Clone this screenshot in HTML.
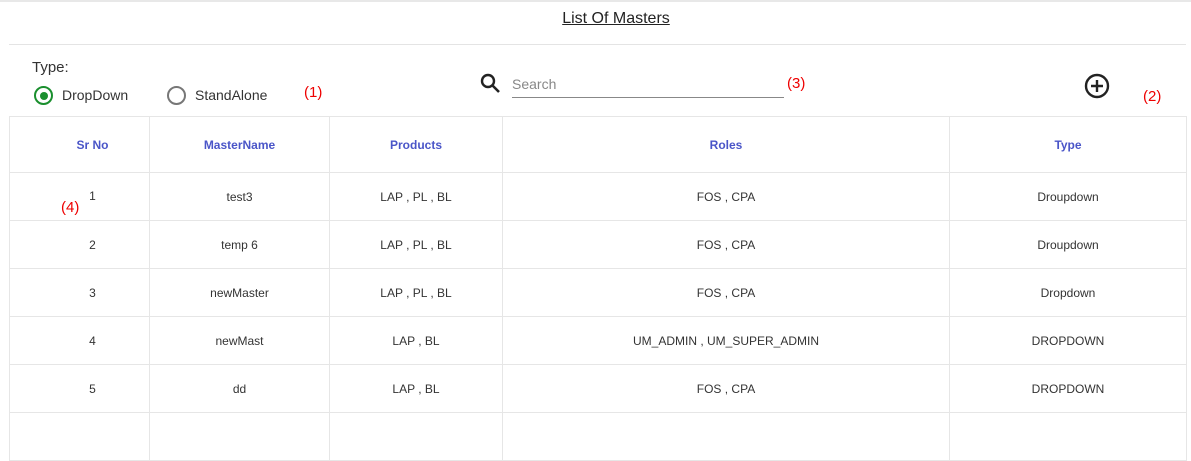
<!DOCTYPE html><html><head><style>
body{margin:0;width:1191px;height:425px;overflow:hidden;background:#fff;font-family:"Liberation Sans",sans-serif;position:relative}
.a{position:absolute}
.red{color:#e00;font-size:15px}
table{position:absolute;left:9px;top:116px;border-collapse:collapse;width:1177px;table-layout:fixed}
td,th{border:1px solid #e6e6e6;text-align:center;font-size:12px;color:#333;padding:0;box-sizing:border-box}
th{height:56px;color:#4a55c8;font-weight:bold}
td{height:48px}
tr td:first-child,tr th:first-child{padding-left:26px}
</style></head><body>
<div class="a" style="left:0;top:0;width:1191px;height:2px;background:#e8e8e8"></div>
<div class="a" style="left:0;width:1232px;top:10px;text-align:center;font-size:16px;color:#222;text-decoration:underline">List Of Masters</div>
<div class="a" style="left:9px;top:44px;width:1177px;height:1px;background:#e4e4e4"></div>
<div class="a" style="left:32px;top:59px;font-size:15px;color:#333">Type:</div>
<div class="a" style="left:34px;top:86px;width:19px;height:19px;border:2px solid #1a8f2e;border-radius:50%;box-sizing:border-box"><div style="margin:3.5px;width:8px;height:8px;border-radius:50%;background:#1a8f2e"></div></div>
<div class="a" style="left:62px;top:87px;font-size:14px;color:#333">DropDown</div>
<div class="a" style="left:167px;top:86px;width:19px;height:19px;border:2px solid #777;border-radius:50%;box-sizing:border-box"></div>
<div class="a" style="left:195px;top:87px;font-size:14px;color:#333">StandAlone</div>
<div class="a red" style="left:304px;top:84px">(1)</div>
<svg class="a" style="left:480px;top:73px" width="22" height="22" viewBox="0 0 22 22"><circle cx="8" cy="8" r="6" fill="none" stroke="#222" stroke-width="2.4"/><line x1="12.5" y1="12.5" x2="19" y2="19" stroke="#222" stroke-width="2.6"/></svg>
<div class="a" style="left:512px;top:76px;font-size:14px;color:#888">Search</div>
<div class="a" style="left:512px;top:97px;width:272px;height:1px;background:#888"></div>
<div class="a red" style="left:787px;top:75px">(3)</div>
<svg class="a" style="left:1084px;top:73px" width="26" height="26" viewBox="0 0 26 26"><circle cx="13" cy="13" r="11" fill="none" stroke="#222" stroke-width="2.4"/><path d="M13 7v12M7 13h12" stroke="#222" stroke-width="2.4"/></svg>
<div class="a red" style="left:1143px;top:88px">(2)</div>
<table>
<colgroup><col style="width:140px"><col style="width:180px"><col style="width:173px"><col style="width:447px"><col style="width:237px"></colgroup>
<tr><th>Sr No</th><th>MasterName</th><th>Products</th><th>Roles</th><th>Type</th></tr>
<tr><td><span style="position:relative;top:-1px">1</span></td><td>test3</td><td>LAP , PL , BL</td><td>FOS , CPA</td><td>Droupdown</td></tr>
<tr><td>2</td><td>temp 6</td><td>LAP , PL , BL</td><td>FOS , CPA</td><td>Droupdown</td></tr>
<tr><td>3</td><td>newMaster</td><td>LAP , PL , BL</td><td>FOS , CPA</td><td>Dropdown</td></tr>
<tr><td>4</td><td>newMast</td><td>LAP , BL</td><td>UM_ADMIN , UM_SUPER_ADMIN</td><td>DROPDOWN</td></tr>
<tr><td>5</td><td>dd</td><td>LAP , BL</td><td>FOS , CPA</td><td>DROPDOWN</td></tr>
<tr><td></td><td></td><td></td><td></td><td></td></tr>
</table>
<div class="a red" style="left:61px;top:199px">(4)</div>
</body></html>
